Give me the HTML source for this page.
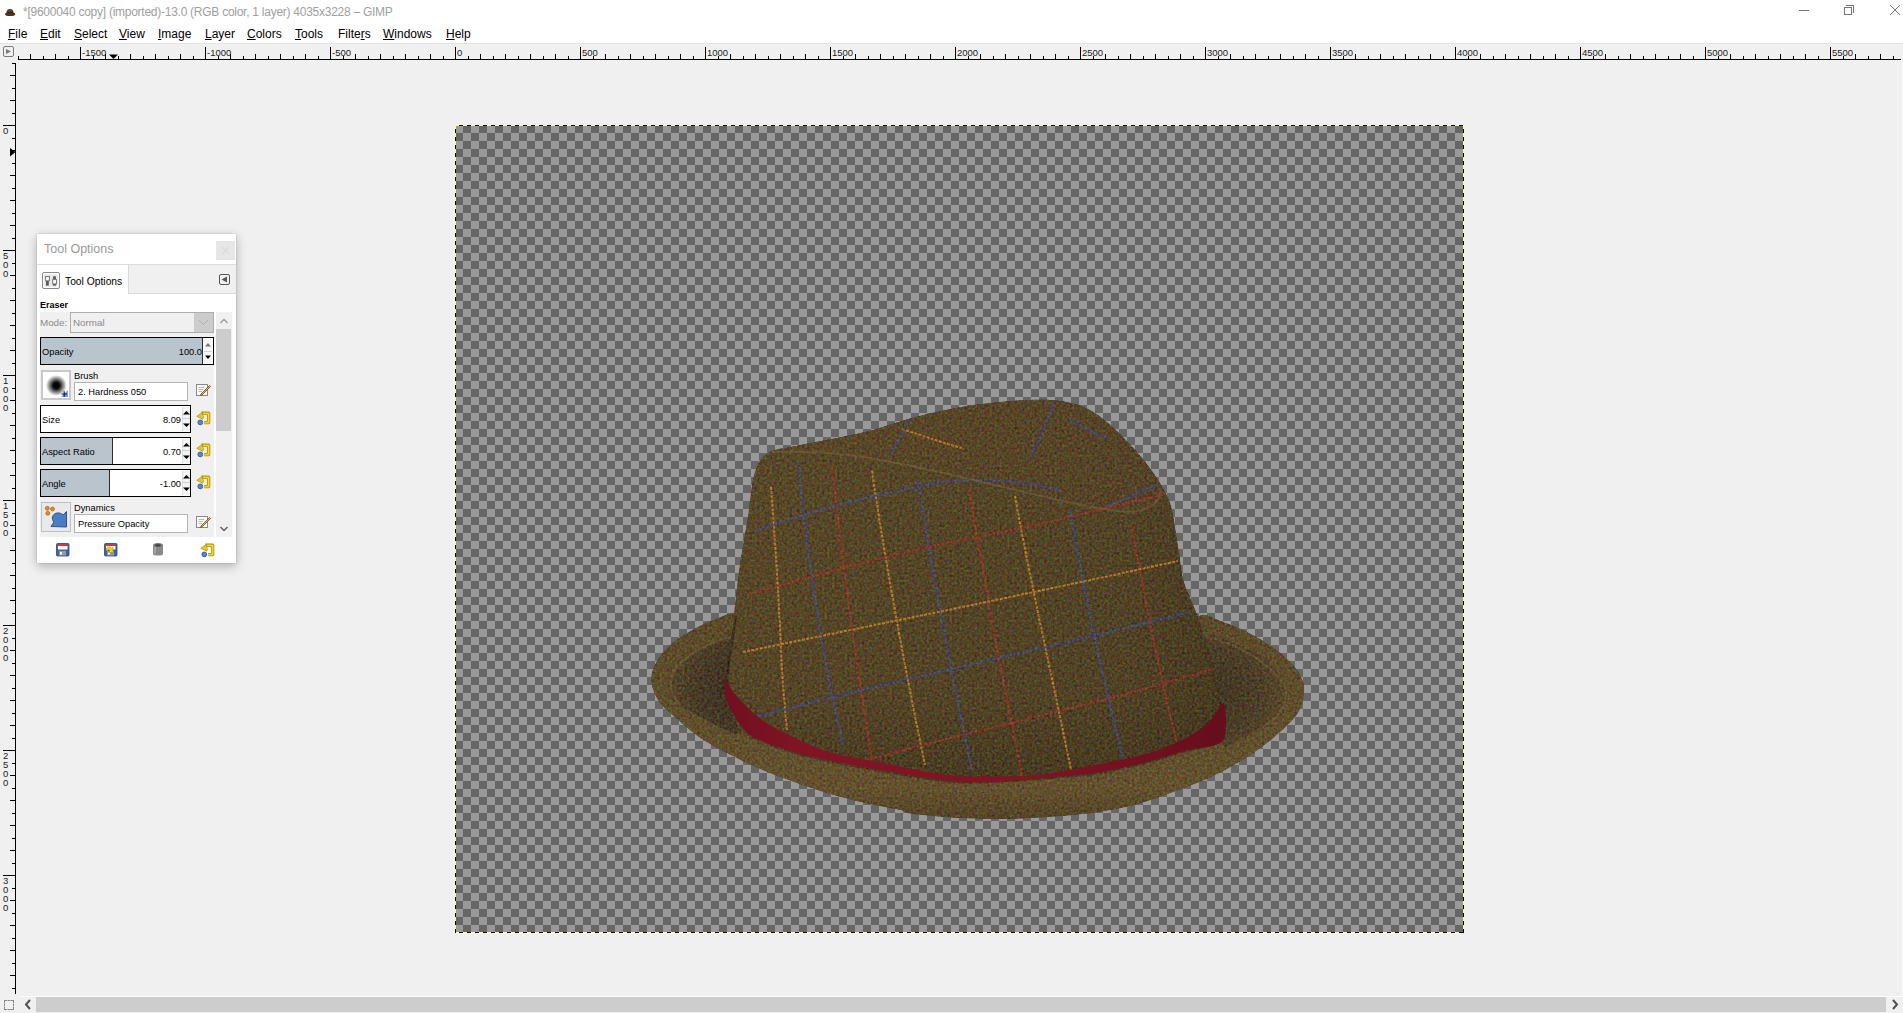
<!DOCTYPE html><html><head><meta charset="utf-8"><style>
*{margin:0;padding:0;box-sizing:border-box}
html,body{width:1903px;height:1013px;overflow:hidden;background:#f0f0f0;font-family:"Liberation Sans",sans-serif;}
body{position:relative}
.a{position:absolute}
.rl{font-family:"Liberation Sans",sans-serif;font-size:9.5px;fill:#1a1a1a}
.menu span{position:absolute;top:27px;font-size:12px;color:#000;line-height:14px}
.menu u{text-decoration:underline;text-underline-offset:1px;text-decoration-thickness:1px}
.chk{background-color:#666;background-image:linear-gradient(45deg,#999 25%,transparent 25%,transparent 75%,#999 75%),linear-gradient(45deg,#999 25%,transparent 25%,transparent 75%,#999 75%);background-size:16px 16px;background-position:8px 0,0 8px}
</style></head><body>
<div class="a" style="left:0;top:0;width:1903px;height:43px;background:#fff"></div>
<div class="a" style="left:0;top:43px;width:1903px;height:1px;background:#e3e3e3"></div>
<div class="a" style="left:23px;top:5px;font-size:12px;color:#a0a0a0;white-space:nowrap;letter-spacing:-0.26px">*[9600040 copy] (imported)-13.0 (RGB color, 1 layer) 4035x3228 – GIMP</div>
<svg class="a" style="left:0;top:0" width="20" height="20"><path d="M6.5,13 C6.5,10 7.5,9 10,9 C12.5,9 13.5,10 13.5,13 Z" fill="#5a4028"/><path d="M5,14.2 C5,12.8 7,12.5 10,12.5 C13,12.5 15.3,12.8 15.3,14.2 C15.3,15.6 13,16 10,16 C7,16 5,15.6 5,14.2Z" fill="#4a3420"/><path d="M6.8,12.6 H13.3" stroke="#2e2010" stroke-width="0.8"/></svg>
<div class="a" style="left:1799px;top:10px;width:10px;height:1px;background:#777"></div>
<div class="a" style="left:1844px;top:7px;width:8px;height:8px;border:1px solid #777"></div>
<div class="a" style="left:1846px;top:5px;width:8px;height:8px;border-top:1px solid #777;border-right:1px solid #777"></div>
<svg class="a" style="left:1889px;top:4px" width="12" height="12"><path d="M1 1L11 11M11 1L1 11" stroke="#777" stroke-width="1"/></svg>
<div class="menu"><span style="left:8px"><u>F</u>ile</span><span style="left:40px"><u>E</u>dit</span><span style="left:74px"><u>S</u>elect</span><span style="left:119px"><u>V</u>iew</span><span style="left:158px"><u>I</u>mage</span><span style="left:205px"><u>L</u>ayer</span><span style="left:247px"><u>C</u>olors</span><span style="left:295px"><u>T</u>ools</span><span style="left:338px">Filte<u>r</u>s</span><span style="left:383px"><u>W</u>indows</span><span style="left:446px"><u>H</u>elp</span></div>
<div class="a" style="left:3px;top:46px;width:11px;height:11px;border:1px solid #7a7a7a;border-radius:2px"></div>
<svg class="a" style="left:0;top:40px" width="20" height="20"><path d="M6 9 L11 11.5 L6 14 Z" fill="#7a7a7a"/></svg>
<svg class="a" style="left:0;top:0" width="1903" height="64"><rect x="18" y="59" width="1883" height="1" fill="#000"/><rect x="18" y="56" width="1" height="3" fill="#000"/><rect x="30" y="54" width="1" height="5" fill="#000"/><rect x="43" y="56" width="1" height="3" fill="#000"/><rect x="55" y="54" width="1" height="5" fill="#000"/><rect x="68" y="56" width="1" height="3" fill="#000"/><rect x="80" y="47" width="1" height="12" fill="#000"/><text x="82" y="56" class="rl">-1500</text><rect x="93" y="56" width="1" height="3" fill="#000"/><rect x="105" y="54" width="1" height="5" fill="#000"/><rect x="118" y="56" width="1" height="3" fill="#000"/><rect x="130" y="54" width="1" height="5" fill="#000"/><rect x="143" y="56" width="1" height="3" fill="#000"/><rect x="155" y="54" width="1" height="5" fill="#000"/><rect x="168" y="56" width="1" height="3" fill="#000"/><rect x="180" y="54" width="1" height="5" fill="#000"/><rect x="193" y="56" width="1" height="3" fill="#000"/><rect x="205" y="47" width="1" height="12" fill="#000"/><text x="207" y="56" class="rl">-1000</text><rect x="218" y="56" width="1" height="3" fill="#000"/><rect x="230" y="54" width="1" height="5" fill="#000"/><rect x="243" y="56" width="1" height="3" fill="#000"/><rect x="255" y="54" width="1" height="5" fill="#000"/><rect x="268" y="56" width="1" height="3" fill="#000"/><rect x="280" y="54" width="1" height="5" fill="#000"/><rect x="293" y="56" width="1" height="3" fill="#000"/><rect x="305" y="54" width="1" height="5" fill="#000"/><rect x="318" y="56" width="1" height="3" fill="#000"/><rect x="330" y="47" width="1" height="12" fill="#000"/><text x="332" y="56" class="rl">-500</text><rect x="343" y="56" width="1" height="3" fill="#000"/><rect x="355" y="54" width="1" height="5" fill="#000"/><rect x="368" y="56" width="1" height="3" fill="#000"/><rect x="380" y="54" width="1" height="5" fill="#000"/><rect x="393" y="56" width="1" height="3" fill="#000"/><rect x="405" y="54" width="1" height="5" fill="#000"/><rect x="418" y="56" width="1" height="3" fill="#000"/><rect x="430" y="54" width="1" height="5" fill="#000"/><rect x="443" y="56" width="1" height="3" fill="#000"/><rect x="455" y="47" width="1" height="12" fill="#000"/><text x="457" y="56" class="rl">0</text><rect x="468" y="56" width="1" height="3" fill="#000"/><rect x="480" y="54" width="1" height="5" fill="#000"/><rect x="493" y="56" width="1" height="3" fill="#000"/><rect x="505" y="54" width="1" height="5" fill="#000"/><rect x="518" y="56" width="1" height="3" fill="#000"/><rect x="530" y="54" width="1" height="5" fill="#000"/><rect x="543" y="56" width="1" height="3" fill="#000"/><rect x="555" y="54" width="1" height="5" fill="#000"/><rect x="568" y="56" width="1" height="3" fill="#000"/><rect x="580" y="47" width="1" height="12" fill="#000"/><text x="582" y="56" class="rl">500</text><rect x="593" y="56" width="1" height="3" fill="#000"/><rect x="605" y="54" width="1" height="5" fill="#000"/><rect x="618" y="56" width="1" height="3" fill="#000"/><rect x="630" y="54" width="1" height="5" fill="#000"/><rect x="643" y="56" width="1" height="3" fill="#000"/><rect x="655" y="54" width="1" height="5" fill="#000"/><rect x="668" y="56" width="1" height="3" fill="#000"/><rect x="680" y="54" width="1" height="5" fill="#000"/><rect x="693" y="56" width="1" height="3" fill="#000"/><rect x="705" y="47" width="1" height="12" fill="#000"/><text x="707" y="56" class="rl">1000</text><rect x="718" y="56" width="1" height="3" fill="#000"/><rect x="730" y="54" width="1" height="5" fill="#000"/><rect x="743" y="56" width="1" height="3" fill="#000"/><rect x="755" y="54" width="1" height="5" fill="#000"/><rect x="768" y="56" width="1" height="3" fill="#000"/><rect x="780" y="54" width="1" height="5" fill="#000"/><rect x="793" y="56" width="1" height="3" fill="#000"/><rect x="805" y="54" width="1" height="5" fill="#000"/><rect x="818" y="56" width="1" height="3" fill="#000"/><rect x="830" y="47" width="1" height="12" fill="#000"/><text x="832" y="56" class="rl">1500</text><rect x="843" y="56" width="1" height="3" fill="#000"/><rect x="855" y="54" width="1" height="5" fill="#000"/><rect x="868" y="56" width="1" height="3" fill="#000"/><rect x="880" y="54" width="1" height="5" fill="#000"/><rect x="893" y="56" width="1" height="3" fill="#000"/><rect x="905" y="54" width="1" height="5" fill="#000"/><rect x="918" y="56" width="1" height="3" fill="#000"/><rect x="930" y="54" width="1" height="5" fill="#000"/><rect x="943" y="56" width="1" height="3" fill="#000"/><rect x="955" y="47" width="1" height="12" fill="#000"/><text x="957" y="56" class="rl">2000</text><rect x="968" y="56" width="1" height="3" fill="#000"/><rect x="980" y="54" width="1" height="5" fill="#000"/><rect x="993" y="56" width="1" height="3" fill="#000"/><rect x="1005" y="54" width="1" height="5" fill="#000"/><rect x="1018" y="56" width="1" height="3" fill="#000"/><rect x="1030" y="54" width="1" height="5" fill="#000"/><rect x="1043" y="56" width="1" height="3" fill="#000"/><rect x="1055" y="54" width="1" height="5" fill="#000"/><rect x="1068" y="56" width="1" height="3" fill="#000"/><rect x="1080" y="47" width="1" height="12" fill="#000"/><text x="1082" y="56" class="rl">2500</text><rect x="1093" y="56" width="1" height="3" fill="#000"/><rect x="1105" y="54" width="1" height="5" fill="#000"/><rect x="1118" y="56" width="1" height="3" fill="#000"/><rect x="1130" y="54" width="1" height="5" fill="#000"/><rect x="1143" y="56" width="1" height="3" fill="#000"/><rect x="1155" y="54" width="1" height="5" fill="#000"/><rect x="1168" y="56" width="1" height="3" fill="#000"/><rect x="1180" y="54" width="1" height="5" fill="#000"/><rect x="1193" y="56" width="1" height="3" fill="#000"/><rect x="1205" y="47" width="1" height="12" fill="#000"/><text x="1207" y="56" class="rl">3000</text><rect x="1218" y="56" width="1" height="3" fill="#000"/><rect x="1230" y="54" width="1" height="5" fill="#000"/><rect x="1243" y="56" width="1" height="3" fill="#000"/><rect x="1255" y="54" width="1" height="5" fill="#000"/><rect x="1268" y="56" width="1" height="3" fill="#000"/><rect x="1280" y="54" width="1" height="5" fill="#000"/><rect x="1293" y="56" width="1" height="3" fill="#000"/><rect x="1305" y="54" width="1" height="5" fill="#000"/><rect x="1318" y="56" width="1" height="3" fill="#000"/><rect x="1330" y="47" width="1" height="12" fill="#000"/><text x="1332" y="56" class="rl">3500</text><rect x="1343" y="56" width="1" height="3" fill="#000"/><rect x="1355" y="54" width="1" height="5" fill="#000"/><rect x="1368" y="56" width="1" height="3" fill="#000"/><rect x="1380" y="54" width="1" height="5" fill="#000"/><rect x="1393" y="56" width="1" height="3" fill="#000"/><rect x="1405" y="54" width="1" height="5" fill="#000"/><rect x="1418" y="56" width="1" height="3" fill="#000"/><rect x="1430" y="54" width="1" height="5" fill="#000"/><rect x="1443" y="56" width="1" height="3" fill="#000"/><rect x="1455" y="47" width="1" height="12" fill="#000"/><text x="1457" y="56" class="rl">4000</text><rect x="1468" y="56" width="1" height="3" fill="#000"/><rect x="1480" y="54" width="1" height="5" fill="#000"/><rect x="1493" y="56" width="1" height="3" fill="#000"/><rect x="1505" y="54" width="1" height="5" fill="#000"/><rect x="1518" y="56" width="1" height="3" fill="#000"/><rect x="1530" y="54" width="1" height="5" fill="#000"/><rect x="1543" y="56" width="1" height="3" fill="#000"/><rect x="1555" y="54" width="1" height="5" fill="#000"/><rect x="1568" y="56" width="1" height="3" fill="#000"/><rect x="1580" y="47" width="1" height="12" fill="#000"/><text x="1582" y="56" class="rl">4500</text><rect x="1593" y="56" width="1" height="3" fill="#000"/><rect x="1605" y="54" width="1" height="5" fill="#000"/><rect x="1618" y="56" width="1" height="3" fill="#000"/><rect x="1630" y="54" width="1" height="5" fill="#000"/><rect x="1643" y="56" width="1" height="3" fill="#000"/><rect x="1655" y="54" width="1" height="5" fill="#000"/><rect x="1668" y="56" width="1" height="3" fill="#000"/><rect x="1680" y="54" width="1" height="5" fill="#000"/><rect x="1693" y="56" width="1" height="3" fill="#000"/><rect x="1705" y="47" width="1" height="12" fill="#000"/><text x="1707" y="56" class="rl">5000</text><rect x="1718" y="56" width="1" height="3" fill="#000"/><rect x="1730" y="54" width="1" height="5" fill="#000"/><rect x="1743" y="56" width="1" height="3" fill="#000"/><rect x="1755" y="54" width="1" height="5" fill="#000"/><rect x="1768" y="56" width="1" height="3" fill="#000"/><rect x="1780" y="54" width="1" height="5" fill="#000"/><rect x="1793" y="56" width="1" height="3" fill="#000"/><rect x="1805" y="54" width="1" height="5" fill="#000"/><rect x="1818" y="56" width="1" height="3" fill="#000"/><rect x="1830" y="47" width="1" height="12" fill="#000"/><text x="1832" y="56" class="rl">5500</text><rect x="1843" y="56" width="1" height="3" fill="#000"/><rect x="1855" y="54" width="1" height="5" fill="#000"/><rect x="1868" y="56" width="1" height="3" fill="#000"/><rect x="1880" y="54" width="1" height="5" fill="#000"/><rect x="1893" y="56" width="1" height="3" fill="#000"/><path d="M109 54.5 L118 54.5 L113.5 59 Z" fill="#000"/></svg>
<svg class="a" style="left:0;top:0" width="20" height="1000"><rect x="15" y="63" width="1" height="931" fill="#000"/><rect x="12" y="63" width="3" height="1" fill="#000"/><rect x="10" y="75" width="5" height="1" fill="#000"/><rect x="12" y="88" width="3" height="1" fill="#000"/><rect x="10" y="100" width="5" height="1" fill="#000"/><rect x="12" y="113" width="3" height="1" fill="#000"/><rect x="3" y="125" width="12" height="1" fill="#000"/><text x="3" y="134" class="rl">0</text><rect x="12" y="138" width="3" height="1" fill="#000"/><rect x="10" y="150" width="5" height="1" fill="#000"/><rect x="12" y="163" width="3" height="1" fill="#000"/><rect x="10" y="175" width="5" height="1" fill="#000"/><rect x="12" y="188" width="3" height="1" fill="#000"/><rect x="10" y="200" width="5" height="1" fill="#000"/><rect x="12" y="213" width="3" height="1" fill="#000"/><rect x="10" y="225" width="5" height="1" fill="#000"/><rect x="12" y="238" width="3" height="1" fill="#000"/><rect x="3" y="250" width="12" height="1" fill="#000"/><text x="3" y="259" class="rl">5</text><text x="3" y="268" class="rl">0</text><text x="3" y="277" class="rl">0</text><rect x="12" y="263" width="3" height="1" fill="#000"/><rect x="10" y="275" width="5" height="1" fill="#000"/><rect x="12" y="288" width="3" height="1" fill="#000"/><rect x="10" y="300" width="5" height="1" fill="#000"/><rect x="12" y="313" width="3" height="1" fill="#000"/><rect x="10" y="325" width="5" height="1" fill="#000"/><rect x="12" y="338" width="3" height="1" fill="#000"/><rect x="10" y="350" width="5" height="1" fill="#000"/><rect x="12" y="363" width="3" height="1" fill="#000"/><rect x="3" y="375" width="12" height="1" fill="#000"/><text x="3" y="384" class="rl">1</text><text x="3" y="393" class="rl">0</text><text x="3" y="402" class="rl">0</text><text x="3" y="411" class="rl">0</text><rect x="12" y="388" width="3" height="1" fill="#000"/><rect x="10" y="400" width="5" height="1" fill="#000"/><rect x="12" y="413" width="3" height="1" fill="#000"/><rect x="10" y="425" width="5" height="1" fill="#000"/><rect x="12" y="438" width="3" height="1" fill="#000"/><rect x="10" y="450" width="5" height="1" fill="#000"/><rect x="12" y="463" width="3" height="1" fill="#000"/><rect x="10" y="475" width="5" height="1" fill="#000"/><rect x="12" y="488" width="3" height="1" fill="#000"/><rect x="3" y="500" width="12" height="1" fill="#000"/><text x="3" y="509" class="rl">1</text><text x="3" y="518" class="rl">5</text><text x="3" y="527" class="rl">0</text><text x="3" y="536" class="rl">0</text><rect x="12" y="513" width="3" height="1" fill="#000"/><rect x="10" y="525" width="5" height="1" fill="#000"/><rect x="12" y="538" width="3" height="1" fill="#000"/><rect x="10" y="550" width="5" height="1" fill="#000"/><rect x="12" y="563" width="3" height="1" fill="#000"/><rect x="10" y="575" width="5" height="1" fill="#000"/><rect x="12" y="588" width="3" height="1" fill="#000"/><rect x="10" y="600" width="5" height="1" fill="#000"/><rect x="12" y="613" width="3" height="1" fill="#000"/><rect x="3" y="625" width="12" height="1" fill="#000"/><text x="3" y="634" class="rl">2</text><text x="3" y="643" class="rl">0</text><text x="3" y="652" class="rl">0</text><text x="3" y="661" class="rl">0</text><rect x="12" y="638" width="3" height="1" fill="#000"/><rect x="10" y="650" width="5" height="1" fill="#000"/><rect x="12" y="663" width="3" height="1" fill="#000"/><rect x="10" y="675" width="5" height="1" fill="#000"/><rect x="12" y="688" width="3" height="1" fill="#000"/><rect x="10" y="700" width="5" height="1" fill="#000"/><rect x="12" y="713" width="3" height="1" fill="#000"/><rect x="10" y="725" width="5" height="1" fill="#000"/><rect x="12" y="738" width="3" height="1" fill="#000"/><rect x="3" y="750" width="12" height="1" fill="#000"/><text x="3" y="759" class="rl">2</text><text x="3" y="768" class="rl">5</text><text x="3" y="777" class="rl">0</text><text x="3" y="786" class="rl">0</text><rect x="12" y="763" width="3" height="1" fill="#000"/><rect x="10" y="775" width="5" height="1" fill="#000"/><rect x="12" y="788" width="3" height="1" fill="#000"/><rect x="10" y="800" width="5" height="1" fill="#000"/><rect x="12" y="813" width="3" height="1" fill="#000"/><rect x="10" y="825" width="5" height="1" fill="#000"/><rect x="12" y="838" width="3" height="1" fill="#000"/><rect x="10" y="850" width="5" height="1" fill="#000"/><rect x="12" y="863" width="3" height="1" fill="#000"/><rect x="3" y="875" width="12" height="1" fill="#000"/><text x="3" y="884" class="rl">3</text><text x="3" y="893" class="rl">0</text><text x="3" y="902" class="rl">0</text><text x="3" y="911" class="rl">0</text><rect x="12" y="888" width="3" height="1" fill="#000"/><rect x="10" y="900" width="5" height="1" fill="#000"/><rect x="12" y="913" width="3" height="1" fill="#000"/><rect x="10" y="925" width="5" height="1" fill="#000"/><rect x="12" y="938" width="3" height="1" fill="#000"/><rect x="10" y="950" width="5" height="1" fill="#000"/><rect x="12" y="963" width="3" height="1" fill="#000"/><rect x="10" y="975" width="5" height="1" fill="#000"/><rect x="12" y="988" width="3" height="1" fill="#000"/><path d="M10 148 L15.5 152 L10 156.5 Z" fill="#000"/></svg>
<div class="a chk" style="left:455px;top:125px;width:1009px;height:808px"></div>
<div class="a" style="left:455px;top:125px;width:1009px;height:1px;background:repeating-linear-gradient(90deg,#ffff80 0 4px,#000 4px 8px)"></div>
<div class="a" style="left:455px;top:932px;width:1009px;height:1px;background:repeating-linear-gradient(90deg,#ffff80 0 4px,#000 4px 8px)"></div>
<div class="a" style="left:455px;top:125px;width:1px;height:808px;background:repeating-linear-gradient(180deg,#ffff80 0 4px,#000 4px 8px)"></div>
<div class="a" style="left:1463px;top:125px;width:1px;height:808px;background:repeating-linear-gradient(180deg,#ffff80 0 4px,#000 4px 8px)"></div>
<svg class="a" style="left:0;top:0" width="1903" height="1013" viewBox="0 0 1903 1013">
<defs>
<filter id="tex" x="600" y="380" width="750" height="460" filterUnits="userSpaceOnUse" color-interpolation-filters="sRGB">
  <feTurbulence type="fractalNoise" baseFrequency="0.4" numOctaves="2" seed="7" result="n"/>
  <feColorMatrix in="n" type="matrix" values="1 0 0 0 0  0 1 0 0 0  0 0 1 0 0  0 0 0 0 1" result="n0"/>
  <feGaussianBlur in="n0" stdDeviation="0.5" result="n1"/>
  <feComposite in="SourceGraphic" in2="n1" operator="arithmetic" k1="0" k2="1" k3="0.4" k4="-0.2" result="m"/>
  <feComposite in="m" in2="SourceGraphic" operator="in"/>
</filter>
<linearGradient id="gCrown" x1="726" y1="0" x2="1226" y2="0" gradientUnits="userSpaceOnUse">
  <stop offset="0" stop-color="#584828"/><stop offset="0.4" stop-color="#554627"/><stop offset="0.8" stop-color="#524426"/><stop offset="1" stop-color="#493c22"/>
</linearGradient>
<linearGradient id="gCrownV" x1="0" y1="450" x2="0" y2="780" gradientUnits="userSpaceOnUse">
  <stop offset="0" stop-color="#000" stop-opacity="0"/><stop offset="0.75" stop-color="#000" stop-opacity="0.03"/><stop offset="1" stop-color="#000" stop-opacity="0.15"/>
</linearGradient>
<linearGradient id="gBrim" x1="0" y1="614" x2="0" y2="819" gradientUnits="userSpaceOnUse">
  <stop offset="0" stop-color="#5b4a29"/><stop offset="0.55" stop-color="#5f4f2c"/><stop offset="0.85" stop-color="#63512e"/><stop offset="1" stop-color="#544427"/>
</linearGradient>
<linearGradient id="gDent" x1="772" y1="400" x2="1163" y2="512" gradientUnits="userSpaceOnUse">
  <stop offset="0" stop-color="#5a4827"/><stop offset="1" stop-color="#544327"/>
</linearGradient>
<linearGradient id="gBand" x1="726" y1="0" x2="1226" y2="0" gradientUnits="userSpaceOnUse">
  <stop offset="0" stop-color="#701020"/><stop offset="0.15" stop-color="#801424"/><stop offset="0.6" stop-color="#801423"/><stop offset="1" stop-color="#650e1c"/>
</linearGradient>
<radialGradient id="gInL" cx="740" cy="690" r="75" gradientUnits="userSpaceOnUse">
  <stop offset="0" stop-color="#3b3020"/><stop offset="0.55" stop-color="#473a27"/><stop offset="1" stop-color="#57482a"/>
</radialGradient>
<radialGradient id="gInR" cx="1215" cy="690" r="80" gradientUnits="userSpaceOnUse">
  <stop offset="0" stop-color="#423624"/><stop offset="0.55" stop-color="#4c3f28"/><stop offset="1" stop-color="#5b4b2b"/>
</radialGradient>
<filter id="soft" x="-5%" y="-20%" width="110%" height="140%"><feGaussianBlur stdDeviation="0.7"/></filter>
</defs>
<g filter="url(#tex)">
<path d="M737.0,614.0 C731.3,610.8 719.3,617.8 711.0,621.0 C702.7,624.2 694.2,628.7 687.0,633.0 C679.8,637.3 673.0,642.3 668.0,647.0 C663.0,651.7 659.8,656.3 657.0,661.0 C654.2,665.7 652.2,670.2 651.5,675.0 C650.8,679.8 651.4,684.7 653.0,689.5 C654.6,694.3 657.2,699.2 661.0,704.0 C664.8,708.8 669.7,712.5 676.0,718.0 C682.3,723.5 691.2,731.5 699.0,737.0 C706.8,742.5 713.2,745.8 723.0,751.0 C732.8,756.2 746.2,762.8 758.0,768.0 C769.8,773.2 782.0,777.7 794.0,782.0 C806.0,786.3 818.2,790.5 830.0,794.0 C841.8,797.5 853.3,800.3 865.0,803.0 C876.7,805.7 892.0,808.2 900.0,810.0 C908.0,811.8 903.0,812.7 913.0,814.0 C923.0,815.3 944.2,817.2 960.0,818.0 C975.8,818.8 992.2,819.2 1008.0,819.0 C1023.8,818.8 1039.8,817.8 1055.0,816.6 C1070.2,815.4 1085.5,814.0 1099.0,812.0 C1112.5,810.0 1123.7,807.9 1136.0,804.6 C1148.3,801.3 1160.7,796.5 1173.0,792.0 C1185.3,787.5 1198.4,782.7 1210.0,777.4 C1221.6,772.1 1233.0,765.7 1242.5,760.0 C1252.0,754.3 1259.6,748.7 1267.0,743.0 C1274.4,737.3 1281.7,730.9 1287.0,725.6 C1292.3,720.3 1296.2,716.4 1299.0,711.0 C1301.8,705.6 1303.5,698.8 1304.0,693.5 C1304.5,688.2 1304.0,683.9 1302.0,679.0 C1300.0,674.1 1297.0,669.4 1292.0,664.0 C1287.0,658.6 1279.5,651.9 1272.0,646.6 C1264.5,641.3 1255.2,636.1 1247.0,632.0 C1238.8,627.9 1231.2,624.5 1223.0,622.0 C1214.8,619.5 1203.5,610.7 1198.0,617.0 C1192.5,623.3 1198.0,646.2 1190.0,660.0 C1182.0,673.8 1215.0,693.3 1150.0,700.0 C1085.0,706.7 867.5,710.0 800.0,700.0 C732.5,690.0 755.5,654.3 745.0,640.0 C734.5,625.7 742.7,617.2 737.0,614.0 Z" fill="url(#gBrim)"/>
<path d="M733.0,637.0 C730.5,628.8 724.4,638.6 718.0,641.0 C711.6,643.4 701.6,647.1 694.5,651.6 C687.4,656.1 680.0,662.8 675.6,668.2 C671.2,673.6 668.3,678.7 668.0,684.0 C667.7,689.3 668.7,694.5 674.0,700.0 C679.3,705.5 689.0,711.5 700.0,717.0 C711.0,722.5 734.5,737.5 740.0,733.0 C745.5,728.5 734.2,706.0 733.0,690.0 C731.8,674.0 735.5,645.2 733.0,637.0 Z" fill="url(#gInL)"/>
<path d="M1206.0,637.0 C1209.5,629.3 1225.2,640.3 1235.0,644.0 C1244.8,647.7 1256.8,652.3 1265.0,659.0 C1273.2,665.7 1280.8,676.7 1284.5,684.0 C1288.2,691.3 1289.1,696.8 1287.0,703.0 C1284.9,709.2 1279.4,715.2 1272.0,721.0 C1264.6,726.8 1251.0,734.2 1242.5,738.0 C1234.0,741.8 1225.8,752.0 1221.0,744.0 C1216.2,736.0 1216.5,707.8 1214.0,690.0 C1211.5,672.2 1202.5,644.7 1206.0,637.0 Z" fill="url(#gInR)"/>
<path d="M726.5,680.0 C726.8,674.3 728.9,670.2 730.0,661.0 C731.1,651.8 731.5,640.0 733.0,625.0 C734.5,610.0 736.5,589.2 739.0,571.0 C741.5,552.8 745.7,531.2 748.0,516.0 C750.3,500.8 751.0,489.2 753.0,480.0 C755.0,470.8 756.8,465.8 760.0,461.0 C763.2,456.2 765.7,453.6 772.0,451.0 C778.3,448.4 788.7,447.4 798.0,445.5 C807.3,443.6 816.5,442.0 828.0,439.7 C839.5,437.4 852.8,435.3 867.0,431.6 C881.2,427.9 897.5,421.8 913.0,417.7 C928.5,413.6 944.5,410.0 960.0,407.3 C975.5,404.6 992.5,402.9 1006.0,401.6 C1019.5,400.3 1031.3,399.7 1041.0,399.7 C1050.7,399.7 1056.3,400.1 1064.0,401.6 C1071.7,403.1 1079.3,404.6 1087.0,408.5 C1094.7,412.4 1102.3,418.1 1110.0,424.7 C1117.7,431.2 1126.0,440.1 1133.0,447.8 C1140.0,455.5 1146.7,463.6 1152.0,471.0 C1157.3,478.4 1161.7,485.5 1165.0,492.0 C1168.3,498.5 1169.7,500.0 1172.0,510.0 C1174.3,520.0 1177.0,540.0 1179.0,552.0 C1181.0,564.0 1180.8,571.2 1184.0,582.0 C1187.2,592.8 1194.0,605.8 1198.0,617.0 C1202.0,628.2 1204.7,637.8 1208.0,649.0 C1211.3,660.2 1215.5,674.2 1218.0,684.0 C1220.5,693.8 1221.8,700.7 1223.0,708.0 C1224.2,715.3 1225.5,722.2 1225.0,728.0 C1224.5,733.8 1226.5,739.0 1220.0,743.0 C1213.5,747.0 1197.8,748.7 1186.0,752.0 C1174.2,755.3 1163.5,759.3 1149.0,763.0 C1134.5,766.7 1115.5,771.3 1099.0,774.0 C1082.5,776.7 1067.8,777.5 1050.0,779.0 C1032.2,780.5 1009.5,782.5 992.0,783.0 C974.5,783.5 963.7,783.8 945.0,782.0 C926.3,780.2 899.5,775.3 880.0,772.0 C860.5,768.7 843.8,765.5 828.0,762.0 C812.2,758.5 798.5,755.5 785.0,751.0 C771.5,746.5 755.5,740.7 747.0,735.0 C738.5,729.3 737.2,723.7 734.0,717.0 C730.8,710.3 729.2,701.2 728.0,695.0 C726.8,688.8 726.2,685.7 726.5,680.0 Z" fill="url(#gCrown)"/>
<path d="M726.5,680.0 C726.8,674.3 728.9,670.2 730.0,661.0 C731.1,651.8 731.5,640.0 733.0,625.0 C734.5,610.0 736.5,589.2 739.0,571.0 C741.5,552.8 745.7,531.2 748.0,516.0 C750.3,500.8 751.0,489.2 753.0,480.0 C755.0,470.8 756.8,465.8 760.0,461.0 C763.2,456.2 765.7,453.6 772.0,451.0 C778.3,448.4 788.7,447.4 798.0,445.5 C807.3,443.6 816.5,442.0 828.0,439.7 C839.5,437.4 852.8,435.3 867.0,431.6 C881.2,427.9 897.5,421.8 913.0,417.7 C928.5,413.6 944.5,410.0 960.0,407.3 C975.5,404.6 992.5,402.9 1006.0,401.6 C1019.5,400.3 1031.3,399.7 1041.0,399.7 C1050.7,399.7 1056.3,400.1 1064.0,401.6 C1071.7,403.1 1079.3,404.6 1087.0,408.5 C1094.7,412.4 1102.3,418.1 1110.0,424.7 C1117.7,431.2 1126.0,440.1 1133.0,447.8 C1140.0,455.5 1146.7,463.6 1152.0,471.0 C1157.3,478.4 1161.7,485.5 1165.0,492.0 C1168.3,498.5 1169.7,500.0 1172.0,510.0 C1174.3,520.0 1177.0,540.0 1179.0,552.0 C1181.0,564.0 1180.8,571.2 1184.0,582.0 C1187.2,592.8 1194.0,605.8 1198.0,617.0 C1202.0,628.2 1204.7,637.8 1208.0,649.0 C1211.3,660.2 1215.5,674.2 1218.0,684.0 C1220.5,693.8 1221.8,700.7 1223.0,708.0 C1224.2,715.3 1225.5,722.2 1225.0,728.0 C1224.5,733.8 1226.5,739.0 1220.0,743.0 C1213.5,747.0 1197.8,748.7 1186.0,752.0 C1174.2,755.3 1163.5,759.3 1149.0,763.0 C1134.5,766.7 1115.5,771.3 1099.0,774.0 C1082.5,776.7 1067.8,777.5 1050.0,779.0 C1032.2,780.5 1009.5,782.5 992.0,783.0 C974.5,783.5 963.7,783.8 945.0,782.0 C926.3,780.2 899.5,775.3 880.0,772.0 C860.5,768.7 843.8,765.5 828.0,762.0 C812.2,758.5 798.5,755.5 785.0,751.0 C771.5,746.5 755.5,740.7 747.0,735.0 C738.5,729.3 737.2,723.7 734.0,717.0 C730.8,710.3 729.2,701.2 728.0,695.0 C726.8,688.8 726.2,685.7 726.5,680.0 Z" fill="url(#gCrownV)"/>
<path d="M772.0,452.0 C773.3,450.9 788.7,447.6 798.0,445.5 C807.3,443.4 816.5,442.0 828.0,439.7 C839.5,437.4 852.8,435.3 867.0,431.6 C881.2,427.9 897.5,421.8 913.0,417.7 C928.5,413.6 944.5,410.0 960.0,407.3 C975.5,404.6 992.5,402.9 1006.0,401.6 C1019.5,400.3 1031.3,399.7 1041.0,399.7 C1050.7,399.7 1056.3,400.1 1064.0,401.6 C1071.7,403.1 1079.3,404.6 1087.0,408.5 C1094.7,412.4 1102.3,418.1 1110.0,424.7 C1117.7,431.2 1126.0,440.1 1133.0,447.8 C1140.0,455.5 1147.0,464.0 1152.0,471.0 C1157.0,478.0 1161.5,485.2 1163.0,490.0 C1164.5,494.8 1163.7,496.7 1161.0,500.0 C1158.3,503.3 1153.6,507.9 1147.0,510.0 C1140.4,512.1 1131.5,512.8 1121.5,512.5 C1111.5,512.2 1100.5,510.7 1087.0,508.0 C1073.5,505.3 1056.1,500.2 1040.6,496.4 C1025.1,492.6 1011.4,489.2 994.0,485.0 C976.6,480.8 955.7,475.3 936.5,471.0 C917.3,466.7 898.2,462.5 879.0,459.4 C859.8,456.3 835.8,453.6 821.0,452.4 C806.2,451.2 798.2,452.1 790.0,452.0 C781.8,451.9 770.7,453.1 772.0,452.0 Z" fill="url(#gDent)"/>
<path d="M736,616 C732,640 728,662 727,688" stroke="#2e2416" stroke-width="2.5" fill="none" opacity="0.55" filter="url(#soft)"/>
<path d="M1198,619 C1206,645 1214,675 1221,705" stroke="#2e2416" stroke-width="2" fill="none" opacity="0.2" filter="url(#soft)"/>
<path d="M731,637 C712,641 690,652 676,668 C668,680 669,694 680,704" stroke="#7a6440" stroke-width="2" fill="none" opacity="0.5" filter="url(#soft)"/>
<path d="M1206,637 C1235,643 1265,659 1284,684 C1290,700 1282,715 1265,725" stroke="#7a6440" stroke-width="2" fill="none" opacity="0.45" filter="url(#soft)"/>
<clipPath id="cc"><path d="M726.5,680.0 C726.8,674.3 728.9,670.2 730.0,661.0 C731.1,651.8 731.5,640.0 733.0,625.0 C734.5,610.0 736.5,589.2 739.0,571.0 C741.5,552.8 745.7,531.2 748.0,516.0 C750.3,500.8 751.0,489.2 753.0,480.0 C755.0,470.8 756.8,465.8 760.0,461.0 C763.2,456.2 765.7,453.6 772.0,451.0 C778.3,448.4 788.7,447.4 798.0,445.5 C807.3,443.6 816.5,442.0 828.0,439.7 C839.5,437.4 852.8,435.3 867.0,431.6 C881.2,427.9 897.5,421.8 913.0,417.7 C928.5,413.6 944.5,410.0 960.0,407.3 C975.5,404.6 992.5,402.9 1006.0,401.6 C1019.5,400.3 1031.3,399.7 1041.0,399.7 C1050.7,399.7 1056.3,400.1 1064.0,401.6 C1071.7,403.1 1079.3,404.6 1087.0,408.5 C1094.7,412.4 1102.3,418.1 1110.0,424.7 C1117.7,431.2 1126.0,440.1 1133.0,447.8 C1140.0,455.5 1146.7,463.6 1152.0,471.0 C1157.3,478.4 1161.7,485.5 1165.0,492.0 C1168.3,498.5 1169.7,500.0 1172.0,510.0 C1174.3,520.0 1177.0,540.0 1179.0,552.0 C1181.0,564.0 1180.8,571.2 1184.0,582.0 C1187.2,592.8 1194.0,605.8 1198.0,617.0 C1202.0,628.2 1204.7,637.8 1208.0,649.0 C1211.3,660.2 1215.5,674.2 1218.0,684.0 C1220.5,693.8 1221.8,700.7 1223.0,708.0 C1224.2,715.3 1225.5,722.2 1225.0,728.0 C1224.5,733.8 1226.5,739.0 1220.0,743.0 C1213.5,747.0 1197.8,748.7 1186.0,752.0 C1174.2,755.3 1163.5,759.3 1149.0,763.0 C1134.5,766.7 1115.5,771.3 1099.0,774.0 C1082.5,776.7 1067.8,777.5 1050.0,779.0 C1032.2,780.5 1009.5,782.5 992.0,783.0 C974.5,783.5 963.7,783.8 945.0,782.0 C926.3,780.2 899.5,775.3 880.0,772.0 C860.5,768.7 843.8,765.5 828.0,762.0 C812.2,758.5 798.5,755.5 785.0,751.0 C771.5,746.5 755.5,740.7 747.0,735.0 C738.5,729.3 737.2,723.7 734.0,717.0 C730.8,710.3 729.2,701.2 728.0,695.0 C726.8,688.8 726.2,685.7 726.5,680.0 Z"/></clipPath>
<g clip-path="url(#cc)" fill="none" stroke-width="2" stroke-dasharray="3 1.3" opacity="0.85">
<path d="M771,487 C775,540 779,600 781,650 C783,690 785,710 787,730" stroke="#c8802e"/>
<path d="M798,462 C806,540 820,650 843,745" stroke="#3d4ca0"/>
<path d="M832,466 C840,540 852,640 872,760" stroke="#a8302c"/>
<path d="M872,471 C885,560 905,670 925,765" stroke="#c8802e"/>
<path d="M918,480 C933,580 955,690 972,770" stroke="#3d4ca0"/>
<path d="M969,489 C985,590 1005,690 1022,775" stroke="#a8302c"/>
<path d="M1015,496 C1032,590 1055,690 1072,775" stroke="#c8802e"/>
<path d="M1070,510 C1085,600 1108,700 1126,770" stroke="#3d4ca0"/>
<path d="M1131,524 C1145,600 1165,700 1180,755" stroke="#a8302c"/>
<path d="M754,531 C800,515 850,500 941,482 C980,478 1020,480 1060,490" stroke="#3d4ca0"/>
<path d="M750,594 C800,580 880,556 971,538 C1040,526 1110,506 1175,492" stroke="#a8302c"/>
<path d="M743,652 C850,630 1000,600 1178,561" stroke="#c8802e"/>
<path d="M746,720 C850,690 1000,660 1190,612" stroke="#3d4ca0"/>
<path d="M850,765 C950,735 1100,705 1215,668" stroke="#a8302c"/>
<path d="M902,429 C925,436 945,444 962,448" stroke="#c8802e"/>
<path d="M909,420 C903,430 896,444 890,455" stroke="#3d4ca0"/>
<path d="M1054,404 C1045,425 1037,445 1029,459" stroke="#3d4ca0"/>
<path d="M1108,506 C1125,500 1140,490 1158,485" stroke="#3d4ca0"/>
<path d="M1070,418 C1080,426 1090,432 1108,438" stroke="#3d4ca0"/>
</g>
</g>
<path d="M725.0,679.0 C726.0,677.7 729.2,686.2 732.0,690.0 C734.8,693.8 737.4,697.0 741.7,701.5 C746.0,706.0 752.6,712.4 758.0,716.7 C763.4,721.1 768.0,724.0 774.3,727.6 C780.6,731.2 788.8,735.0 796.0,738.4 C803.2,741.8 810.5,745.5 817.8,748.2 C825.0,750.9 832.3,752.9 839.5,754.7 C846.7,756.5 854.5,757.7 861.2,759.0 C868.0,760.3 866.0,759.7 880.0,762.3 C894.0,764.9 926.3,772.5 945.0,774.8 C963.7,777.1 976.2,776.3 992.0,776.3 C1007.8,776.3 1022.2,776.8 1040.0,774.8 C1057.8,772.8 1080.8,767.6 1099.0,764.0 C1117.2,760.4 1134.5,757.3 1149.0,753.0 C1163.5,748.7 1175.8,743.3 1186.0,738.0 C1196.2,732.7 1203.8,726.8 1210.0,721.0 C1216.2,715.2 1220.3,702.3 1223.0,703.0 C1225.7,703.7 1226.5,718.3 1226.0,725.0 C1225.5,731.7 1226.7,738.8 1220.0,743.0 C1213.3,747.2 1197.8,747.4 1186.0,750.5 C1174.2,753.6 1163.5,757.7 1149.0,761.4 C1134.5,765.1 1115.5,769.8 1099.0,772.5 C1082.5,775.2 1067.8,775.8 1050.0,777.4 C1032.2,779.0 1009.5,781.5 992.0,782.0 C974.5,782.5 963.7,782.5 945.0,780.5 C926.3,778.5 895.8,772.7 880.0,770.0 C864.2,767.3 858.6,766.1 850.0,764.5 C841.4,762.9 835.8,761.7 828.6,760.2 C821.4,758.8 814.1,757.6 806.9,755.8 C799.7,754.0 792.4,751.6 785.2,749.3 C778.0,746.9 769.8,744.4 763.5,741.7 C757.2,739.0 752.1,737.4 747.2,733.0 C742.3,728.6 737.6,721.4 734.1,715.6 C730.6,709.8 727.5,704.1 726.0,698.0 C724.5,691.9 724.0,680.3 725.0,679.0 Z" fill="url(#gBand)"/>
<path d="M772,452 C800,451 821,452 850,455 C900,462 950,474 994,485 C1040,496 1090,508 1125,512 C1150,512 1162,502 1160,488" fill="none" stroke="#8d7a55" stroke-width="2" opacity="0.3" filter="url(#soft)"/>
</svg>
<div class="a" style="left:1902px;top:62px;width:1px;height:934px;background:#fafafa"></div>
<div class="a" style="left:20px;top:996px;width:1883px;height:1px;background:#fff"></div>
<div class="a" style="left:36px;top:997px;width:1850px;height:15px;background:#cdcdcd"></div>
<svg class="a" style="left:20px;top:997px" width="16" height="16"><path d="M10 3 L6 7.5 L10 12" stroke="#505050" stroke-width="2" fill="none"/></svg>
<svg class="a" style="left:1887px;top:997px" width="16" height="16"><path d="M6 3 L10 7.5 L6 12" stroke="#505050" stroke-width="2" fill="none"/></svg>
<div class="a" style="left:4px;top:1000px;width:10px;height:10px;border:1px dashed #888"></div>
<div class="a" style="left:37px;top:234px;width:199px;height:329px;background:#fff;box-shadow:0 3px 10px rgba(0,0,0,0.28),0 0 1px rgba(0,0,0,0.3)"></div>
<div class="a" style="left:44px;top:242px;white-space:nowrap;line-height:12px;font-size:12.5px;color:#999;line-height:14px">Tool Options</div>
<div class="a" style="left:216px;top:241px;width:19px;height:19px;background:#e6e6e6"></div>
<svg class="a" style="left:216px;top:241px" width="19" height="19"><path d="M6 6L13 13M13 6L6 13" stroke="#d4d4d4" stroke-width="1"/></svg>
<div class="a" style="left:37px;top:264px;width:199px;height:30px;background:#f0f0f0"></div>
<div class="a" style="left:37px;top:293px;width:199px;height:1px;background:#d9d9d9"></div>
<div class="a" style="left:37px;top:264px;width:92px;height:30px;background:#fff;border-right:1px solid #d9d9d9"></div>
<div class="a" style="left:37px;top:264px;width:199px;height:1px;background:#dcdcdc"></div>
<svg class="a" style="left:42px;top:272px" width="19" height="18"><rect x="0.5" y="0.5" width="17" height="16" rx="1.5" fill="#fff" stroke="#8a8a8a"/><rect x="2.2" y="2.2" width="13.6" height="12.5" fill="#e8e8e8"/><rect x="4" y="9" width="2.8" height="4.7" fill="#5a5a5a"/><rect x="3.6" y="4.5" width="3.8" height="4.3" fill="#fff" stroke="#777" stroke-width="1"/><rect x="11.1" y="4.3" width="2.8" height="2.8" fill="#555"/><rect x="11.1" y="11.8" width="2.8" height="1.9" fill="#555"/><rect x="10.7" y="7.6" width="3.8" height="4.3" fill="#fff" stroke="#777" stroke-width="1"/></svg>
<div class="a" style="left:65px;top:276px;white-space:nowrap;line-height:12px;font-size:10.3px;color:#000">Tool Options</div>
<div class="a" style="left:219px;top:274px;width:11px;height:11px;border:1px solid #555;border-radius:2px"></div>
<svg class="a" style="left:219px;top:274px" width="11" height="11"><path d="M2.5 5.5L8 2.5V8.5Z" fill="#555"/></svg>
<div class="a" style="left:40px;top:299px;white-space:nowrap;line-height:12px;font-size:9px;font-weight:bold;color:#000">Eraser</div>
<div class="a" style="left:40px;top:312px;width:174px;height:225px;background:#f0f0f0"></div>
<div class="a" style="left:40px;top:317px;white-space:nowrap;line-height:12px;font-size:9.8px;color:#8a8a8a">Mode:</div>
<div class="a" style="left:70px;top:312px;width:144px;height:21px;border:1px solid #adadad;background:#f0f0f0"></div>
<div class="a" style="left:194px;top:313px;width:19px;height:19px;background:#cccccc"></div>
<svg class="a" style="left:194px;top:313px" width="19" height="19"><path d="M5 7L9.5 11.5L14 7" stroke="#b0b0b0" fill="none" stroke-width="1"/></svg>
<div class="a" style="left:73px;top:317px;white-space:nowrap;line-height:12px;font-size:9.8px;color:#8a8a8a">Normal</div>
<div class="a" style="left:40px;top:337px;width:174px;height:28px;border:1px solid #000;background:#fff"></div>
<div class="a" style="left:41px;top:338px;width:162px;height:26px;background:#b9c4cd;border-right:1px solid #2b2b2b"></div>
<div class="a" style="left:42px;top:346px;white-space:nowrap;line-height:12px;font-size:9.3px;color:#000">Opacity</div>
<div class="a" style="left:150px;top:346px;white-space:nowrap;line-height:12px;font-size:9.3px;color:#000"><span style="display:inline-block;width:52px;text-align:right">100.0</span></div>
<div class="a" style="left:204px;top:339px;width:8px;height:24px;background:#f6f6f6"></div>
<div class="a" style="left:204px;top:351px;width:8px;height:1px;background:#cfcfcf"></div>
<svg class="a" style="left:203px;top:338px" width="10" height="26"><path d="M2 8.5L5 5L8 8.5Z" fill="#777"/><path d="M2 17.5L5 21L8 17.5Z" fill="#000"/></svg>
<div class="a" style="left:41px;top:370px;width:30px;height:30px;border:2px solid #c9c9c9;background:#fff"></div>
<svg class="a" style="left:41px;top:370px" width="30" height="30"><defs><radialGradient id="bg1"><stop offset="0" stop-color="#000"/><stop offset="0.3" stop-color="#0a0a0a"/><stop offset="0.6" stop-color="#000" stop-opacity="0.55"/><stop offset="1" stop-color="#000" stop-opacity="0"/></radialGradient></defs><circle cx="15.3" cy="15.5" r="10.5" fill="url(#bg1)"/><path d="M20 27L27 20V27Z" fill="#7d9cf0"/><path d="M20.5 24H26M23.2 21.3V26.7" stroke="#0a1a60" stroke-width="1.2"/></svg>
<div class="a" style="left:74px;top:370px;white-space:nowrap;line-height:12px;font-size:9.3px;color:#000">Brush</div>
<div class="a" style="left:74px;top:382px;width:114px;height:19px;border:1px solid #b4b4b4;background:#fff"></div>
<div class="a" style="left:78px;top:386px;white-space:nowrap;line-height:12px;font-size:9.3px;color:#000">2. Hardness 050</div>
<svg class="a" style="left:196px;top:383px" width="15" height="14"><rect x="0.5" y="1.5" width="11" height="11" fill="#fafafa" stroke="#8a8a8a"/><path d="M2.5 4.5H8M2.5 6.5H7M2.5 8.5H6" stroke="#aaa" stroke-width="0.8"/><path d="M5 11L13.5 2.5L14.5 3.5L6 12L4.5 12.5Z" fill="#e8b84a" stroke="#6a4a10" stroke-width="0.8"/></svg>
<div class="a" style="left:40px;top:405px;width:151px;height:28px;border:1px solid #000;background:#fff"></div>
<div class="a" style="left:42px;top:414px;white-space:nowrap;line-height:12px;font-size:9.3px;color:#000">Size</div>
<div class="a" style="left:120px;top:414px;white-space:nowrap;line-height:12px;font-size:9.3px;color:#000"><span style="display:inline-block;width:61px;text-align:right">8.09</span></div>
<div class="a" style="left:182px;top:407px;width:8px;height:24px;background:#f3f3f3;border-left:1px solid #dcdcdc"></div>
<div class="a" style="left:182px;top:418px;width:8px;height:1px;background:#cfcfcf"></div>
<svg class="a" style="left:181px;top:406px" width="10" height="26"><path d="M2 8.5L5.5 5L9 8.5Z" fill="#000"/><path d="M2 17.5L5.5 21L9 17.5Z" fill="#000"/></svg>
<svg class="a" style="left:192px;top:408px" width="22" height="20"><path d="M9.3,5.3 H16.6 V14.6 H12.2" stroke="#a88c10" stroke-width="3.4" fill="none" stroke-linejoin="round"/><path d="M9.3,5.3 H16.6 V14.6 H12.2" stroke="#f2d82a" stroke-width="1.8" fill="none" stroke-linejoin="round"/><path d="M4.8,8.3 L10.8,4 L10.3,6.5 L11.6,8.5 L10.8,11.2Z" fill="#e8c820" stroke="#a88c10" stroke-width="0.7" stroke-linejoin="round"/><circle cx="8.3" cy="14.4" r="2.4" fill="#5a86d0" stroke="#2c4888" stroke-width="0.8"/></svg>
<div class="a" style="left:40px;top:437px;width:151px;height:28px;border:1px solid #000;background:#fff"></div>
<div class="a" style="left:41px;top:438px;width:72px;height:26px;background:#b9c4cd;border-right:1px solid #2b2b2b"></div>
<div class="a" style="left:42px;top:446px;white-space:nowrap;line-height:12px;font-size:9.3px;color:#000">Aspect Ratio</div>
<div class="a" style="left:120px;top:446px;white-space:nowrap;line-height:12px;font-size:9.3px;color:#000"><span style="display:inline-block;width:61px;text-align:right">0.70</span></div>
<div class="a" style="left:182px;top:439px;width:8px;height:24px;background:#f3f3f3;border-left:1px solid #dcdcdc"></div>
<div class="a" style="left:182px;top:450px;width:8px;height:1px;background:#cfcfcf"></div>
<svg class="a" style="left:181px;top:438px" width="10" height="26"><path d="M2 8.5L5.5 5L9 8.5Z" fill="#000"/><path d="M2 17.5L5.5 21L9 17.5Z" fill="#000"/></svg>
<svg class="a" style="left:192px;top:440px" width="22" height="20"><path d="M9.3,5.3 H16.6 V14.6 H12.2" stroke="#a88c10" stroke-width="3.4" fill="none" stroke-linejoin="round"/><path d="M9.3,5.3 H16.6 V14.6 H12.2" stroke="#f2d82a" stroke-width="1.8" fill="none" stroke-linejoin="round"/><path d="M4.8,8.3 L10.8,4 L10.3,6.5 L11.6,8.5 L10.8,11.2Z" fill="#e8c820" stroke="#a88c10" stroke-width="0.7" stroke-linejoin="round"/><circle cx="8.3" cy="14.4" r="2.4" fill="#5a86d0" stroke="#2c4888" stroke-width="0.8"/></svg>
<div class="a" style="left:40px;top:469px;width:151px;height:28px;border:1px solid #000;background:#fff"></div>
<div class="a" style="left:41px;top:470px;width:69px;height:26px;background:#b9c4cd;border-right:1px solid #2b2b2b"></div>
<div class="a" style="left:42px;top:478px;white-space:nowrap;line-height:12px;font-size:9.3px;color:#000">Angle</div>
<div class="a" style="left:120px;top:478px;white-space:nowrap;line-height:12px;font-size:9.3px;color:#000"><span style="display:inline-block;width:61px;text-align:right">-1.00</span></div>
<div class="a" style="left:182px;top:471px;width:8px;height:24px;background:#f3f3f3;border-left:1px solid #dcdcdc"></div>
<div class="a" style="left:182px;top:482px;width:8px;height:1px;background:#cfcfcf"></div>
<svg class="a" style="left:181px;top:470px" width="10" height="26"><path d="M2 8.5L5.5 5L9 8.5Z" fill="#000"/><path d="M2 17.5L5.5 21L9 17.5Z" fill="#000"/></svg>
<svg class="a" style="left:192px;top:472px" width="22" height="20"><path d="M9.3,5.3 H16.6 V14.6 H12.2" stroke="#a88c10" stroke-width="3.4" fill="none" stroke-linejoin="round"/><path d="M9.3,5.3 H16.6 V14.6 H12.2" stroke="#f2d82a" stroke-width="1.8" fill="none" stroke-linejoin="round"/><path d="M4.8,8.3 L10.8,4 L10.3,6.5 L11.6,8.5 L10.8,11.2Z" fill="#e8c820" stroke="#a88c10" stroke-width="0.7" stroke-linejoin="round"/><circle cx="8.3" cy="14.4" r="2.4" fill="#5a86d0" stroke="#2c4888" stroke-width="0.8"/></svg>
<div class="a" style="left:41px;top:502px;width:30px;height:30px;border:1px solid #c0c0c0;background:#e9e9e9"></div>
<svg class="a" style="left:41px;top:502px" width="30" height="30"><circle cx="6.3" cy="6.3" r="2" fill="#e08a20" stroke="#a85a10" stroke-width="0.6"/><circle cx="11.5" cy="7" r="2" fill="#e08a20" stroke="#a85a10" stroke-width="0.6"/><circle cx="6.8" cy="11.3" r="2" fill="#e08a20" stroke="#a85a10" stroke-width="0.6"/><path d="M10 24.5L13 20C10 17 11 12 16 11C19 10.5 21 12 22 13L25.5 9.5V25Z" fill="#4a7ec4" stroke="#234a80" stroke-width="0.9"/></svg>
<div class="a" style="left:74px;top:502px;white-space:nowrap;line-height:12px;font-size:9.3px;color:#000">Dynamics</div>
<div class="a" style="left:74px;top:514px;width:114px;height:19px;border:1px solid #b4b4b4;background:#fff"></div>
<div class="a" style="left:78px;top:518px;white-space:nowrap;line-height:12px;font-size:9.3px;color:#000">Pressure Opacity</div>
<svg class="a" style="left:196px;top:515px" width="15" height="14"><rect x="0.5" y="1.5" width="11" height="11" fill="#fafafa" stroke="#8a8a8a"/><path d="M2.5 4.5H8M2.5 6.5H7M2.5 8.5H6" stroke="#aaa" stroke-width="0.8"/><path d="M5 11L13.5 2.5L14.5 3.5L6 12L4.5 12.5Z" fill="#e8b84a" stroke="#6a4a10" stroke-width="0.8"/></svg>
<div class="a" style="left:216px;top:312px;width:16px;height:225px;background:#f0f0f0"></div>
<div class="a" style="left:216px;top:329px;width:15px;height:102px;background:#cdcdcd"></div>
<svg class="a" style="left:216px;top:312px" width="16" height="225"><path d="M4.5 11L8 7.5L11.5 11" stroke="#a0a0a0" stroke-width="1.5" fill="none"/><path d="M4.5 215L8 218.5L11.5 215" stroke="#606060" stroke-width="1.5" fill="none"/></svg>
<svg class="a" style="left:56px;top:543px" width="14" height="14"><rect x="0.5" y="0.5" width="12.5" height="12.5" rx="1" fill="#3e62a8" stroke="#2a4580" stroke-width="0.8"/><rect x="2" y="1" width="9.5" height="2" fill="#e03030"/><rect x="2" y="3" width="9.5" height="3.5" fill="#fff"/><rect x="3" y="8" width="7" height="4.5" fill="#9a9a9a"/><rect x="4" y="9" width="2" height="2.5" fill="#fff"/></svg>
<svg class="a" style="left:104px;top:543px" width="14" height="14"><rect x="0.5" y="0.5" width="12.5" height="12.5" rx="1" fill="#3e62a8" stroke="#2a4580" stroke-width="0.8"/><rect x="2" y="1" width="9.5" height="2" fill="#e03030"/><rect x="2" y="3" width="9.5" height="3.5" fill="#fff"/><rect x="3" y="8" width="7" height="4.5" fill="#9a9a9a"/><rect x="4" y="9" width="2" height="2.5" fill="#fff"/><path d="M2 7C2 3.5 6 3 7.5 5.5L9 4.5V9.5H4.5L6 8C5 6 3.5 6.5 3.5 8Z" fill="#f0d020" stroke="#9a8010" stroke-width="0.5"/></svg>
<svg class="a" style="left:151px;top:542px" width="14" height="15"><ellipse cx="7" cy="3.5" rx="5" ry="2.5" fill="#777"/><path d="M2 3.5V12C2 14 12 14 12 12V3.5" fill="#8a8a8a"/><ellipse cx="7" cy="3.5" rx="3" ry="1.3" fill="#444"/><path d="M4 5V12" stroke="#bbb" stroke-width="1"/></svg>
<svg class="a" style="left:196px;top:540px" width="22" height="20"><path d="M9.3,5.3 H16.6 V14.6 H12.2" stroke="#a88c10" stroke-width="3.4" fill="none" stroke-linejoin="round"/><path d="M9.3,5.3 H16.6 V14.6 H12.2" stroke="#f2d82a" stroke-width="1.8" fill="none" stroke-linejoin="round"/><path d="M4.8,8.3 L10.8,4 L10.3,6.5 L11.6,8.5 L10.8,11.2Z" fill="#e8c820" stroke="#a88c10" stroke-width="0.7" stroke-linejoin="round"/><circle cx="8.3" cy="14.4" r="2.4" fill="#5a86d0" stroke="#2c4888" stroke-width="0.8"/></svg>
</body></html>
